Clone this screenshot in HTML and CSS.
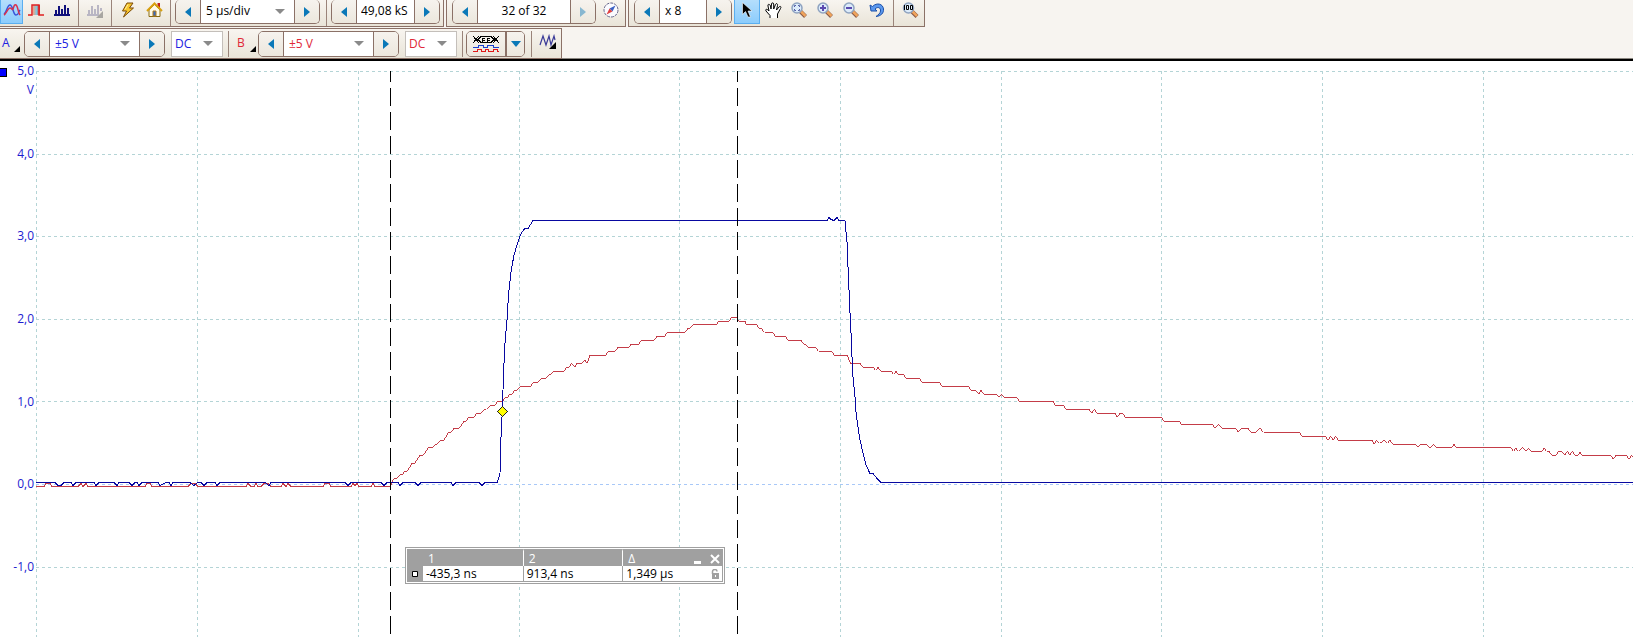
FILE: index.html
```html
<!DOCTYPE html>
<html lang="en">
<head>
<meta charset="utf-8">
<title>Oscilloscope</title>
<link rel="stylesheet" href="styles.css">
</head>
<body>
<svg class="defs" aria-hidden="true">
  <symbol id="left" viewBox="0 0 6 10"><path d="M6 0V10L0 5Z" fill="#0a78b8"/></symbol>
  <symbol id="right" viewBox="0 0 6 10"><path d="M0 0V10L6 5Z" fill="#0a78b8"/></symbol>
  <symbol id="corner" viewBox="0 0 6 6"><path d="M6 0V6H0Z" fill="#000"/></symbol>
  <symbol id="lens" viewBox="0 0 16 16">
    <path d="M9.500 9.500L14.500 14.500" stroke="#8a5a48" stroke-width="4"/>
    <path d="M10 9.500L14.500 14" stroke="#f0a45c" stroke-width="2.500"/>
    <circle cx="6" cy="6" r="5" fill="#dcebfa" stroke="#8fa3c0" stroke-width="1.500"/>
  </symbol>
  <linearGradient id="pulse"><stop offset="0" stop-color="#f8a080"/><stop offset=".5" stop-color="#80c8dc"/><stop offset="1" stop-color="#e02020"/></linearGradient>
</svg>
<header class="head">
  <div class="bar-row">
    <div class="bar bar-main">
      <button class="tool tool-edge on" aria-label="Scope mode"><svg width="18" height="14"><path d="M1 11C4 9 4 2 7 2S10 12 13 12S15 9 17 7" fill="none" stroke="#3a55d8" stroke-width="1.500"/><path d="M1 12C3 11 5 5 7 5S9 8 10 6S11 1 13 2S15 10 17 12" fill="none" stroke="#d8304c" stroke-width="1.500"/></svg></button>
      <button class="tool" aria-label="Persistence mode"><svg width="16" height="14"><path d="M5 2H12V12H5Z" fill="url(#pulse)"/><path d="M0 12H4V2H11V12H16" fill="none" stroke="#e02020" stroke-width="1.500"/></svg></button>
      <button class="tool" aria-label="Spectrum mode"><svg width="16" height="14"><path d="M0 12H16M2 12V7M5 12V3M8 12V6M11 12V2M14 12V5" stroke="#10107c" stroke-width="2"/></svg></button>
      <span class="sep"></span>
      <button class="tool" aria-label="Spectrum options" disabled><svg width="17" height="16"><path d="M0 13H12M2 13V8M5 13V4M8 13V7M11 13V3M14 9V6" stroke="#b9b6c4" stroke-width="2"/><path d="M16 9V16H9Z" fill="#a8a6a2"/></svg></button>
      <span class="sep"></span>
      <button class="tool" aria-label="Auto setup"><svg width="14" height="16"><path d="M6 1H12L8.500 6H12.500L2.500 15L5.500 9H1.500Z" fill="#f7c52c" stroke="#7a4a08"/><path d="M7 2.500L4 7.500" stroke="#fff2a0"/></svg></button>
      <button class="tool" aria-label="Home"><svg width="17" height="16"><path d="M11.500 1H14V6H11.500Z" fill="#c02020"/><path d="M3 8L8.500 2.500L14 8V14.500H3Z" fill="#fffbe8" stroke="#8a6a10"/><path d="M1 9L8.500 1.500L16 9" fill="none" stroke="#d8a010" stroke-width="2"/><path d="M7 9H10V14H7Z" fill="#3a6cc0" stroke="#b07818"/></svg></button>
      <span class="sep"></span>
      <div class="spin">
        <button aria-label="Shorter time"><svg width="6" height="10"><use href="#left"/></svg></button>
        <span class="drop"><select class="w-time" aria-label="Timebase"><option>5 µs/div</option></select></span>
        <button aria-label="Longer time"><svg width="6" height="10"><use href="#right"/></svg></button>
      </div>
      <span class="sep"></span>
      <div class="spin">
        <button aria-label="Fewer samples"><svg width="6" height="10"><use href="#left"/></svg></button>
        <input class="w-samples" aria-label="Samples" value="49,08 kS">
        <button aria-label="More samples"><svg width="6" height="10"><use href="#right"/></svg></button>
      </div>
    </div>
    <div class="bar">
      <div class="spin">
        <button aria-label="Previous buffer"><svg width="6" height="10"><use href="#left"/></svg></button>
        <input class="w-buffer" aria-label="Buffer" value="32 of 32">
        <button aria-label="Next buffer" disabled><svg width="6" height="10"><use href="#right"/></svg></button>
      </div>
      <button class="tool" aria-label="Buffer navigator"><svg width="16" height="16"><circle cx="8" cy="8" r="7" fill="#fbfbff" stroke="#66668a" stroke-dasharray="3 1"/><path d="M12.500 3.500L9.500 9.500L6.500 6.500Z" fill="#3c62c4"/><path d="M3.500 12.500L6.500 6.500L9.500 9.500Z" fill="#e04040"/></svg></button>
    </div>
    <div class="bar">
      <div class="spin">
        <button aria-label="Zoom down"><svg width="6" height="10"><use href="#left"/></svg></button>
        <input class="w-zoom" aria-label="Zoom factor" value="x 8">
        <button aria-label="Zoom up"><svg width="6" height="10"><use href="#right"/></svg></button>
      </div>
      <button class="tool on" aria-label="Select"><svg width="12" height="16"><path d="M1.500 .500V12.500L4.500 9.500L7 15H9.500L7 9H11Z" fill="#000" stroke="#fff" stroke-width=".6"/></svg></button>
      <button class="tool" aria-label="Hand"><svg width="17" height="17"><path d="M5 16V13.500L1 9C0 7 2 6.500 4 9L3 4C2.500 2 4.500 1.500 5.500 4L6 7L6.500 2C6.500 .500 8.500 .500 8.700 2V7L10.500 2.500C11 1 13 1.500 12.500 3.500L11.500 8L14 5C15.500 3.500 16.500 5 15.500 6.500L12.500 12V16" fill="#fff" stroke="#000"/></svg></button>
      <button class="tool" aria-label="Zoom window"><svg width="16" height="16"><use href="#lens"/><path d="M3.500 5V3.500H5M7 3.500H8.500V5M8.500 7V8.500H7M5 8.500H3.500V7" fill="none" stroke="#5560a8"/></svg></button>
      <button class="tool" aria-label="Zoom in"><svg width="16" height="16"><use href="#lens"/><path d="M3 6H9M6 3V9" stroke="#5a4ab0" stroke-width="2"/></svg></button>
      <button class="tool" aria-label="Zoom out"><svg width="16" height="16"><use href="#lens"/><path d="M3 6H9" stroke="#5a4ab0" stroke-width="2"/></svg></button>
      <button class="tool" aria-label="Undo zoom"><svg width="16" height="16"><path d="M1 3L2 9H8L6 7C9 4 12 6 11.500 9C11.300 11.500 9 13 7 14.500C12 14 15 11 14.500 7C14 2 8 0 3.500 4.500Z" fill="#5b98ee" stroke="#1c50a8"/></svg></button>
      <span class="sep"></span>
      <button class="tool" aria-label="Zoom 100"><svg width="17" height="16"><use href="#lens"/><path d="M2.500 3V8M4.500 3.500H6.500V7.500H4.500ZM8.500 3.500H10.500V7.500H8.500Z" fill="none" stroke="#000"/></svg></button>
    </div>
  </div>
  <div class="bar-row">
    <div class="bar bar-channels">
      <button class="chan chan-first a">A<svg width="6" height="6"><use href="#corner"/></svg></button>
      <div class="spin a">
        <button aria-label="Smaller range A"><svg width="6" height="10"><use href="#left"/></svg></button>
        <span class="drop"><select class="w-range" aria-label="Range A"><option>±5 V</option></select></span>
        <button aria-label="Larger range A"><svg width="6" height="10"><use href="#right"/></svg></button>
      </div>
      <span class="drop box a"><select class="w-coupling" aria-label="Coupling A"><option>DC</option></select></span>
      <span class="sep"></span>
      <button class="chan b">B<svg width="6" height="6"><use href="#corner"/></svg></button>
      <div class="spin b">
        <button aria-label="Smaller range B"><svg width="6" height="10"><use href="#left"/></svg></button>
        <span class="drop"><select class="w-range" aria-label="Range B"><option>±5 V</option></select></span>
        <button aria-label="Larger range B"><svg width="6" height="10"><use href="#right"/></svg></button>
      </div>
      <span class="drop box b"><select class="w-coupling" aria-label="Coupling B"><option>DC</option></select></span>
      <span class="sep"></span>
      <div class="spin">
        <button class="digital" aria-label="Digital channels"><svg class="crisp" width="26" height="18"><path d="M0 1L6 8M0 8L6 1M5 4.500L8 1.500H18L21 4.500L18 7.500H8ZM20 1L26 8M20 8L26 1" fill="none" stroke="#000"/><path d="M9.500 7V3.500H12M9.500 5.500H12M14.500 7V3.500H17M14.500 5.500H17" fill="none" stroke="#000"/><path d="M0 12.500H5V10.500H10V12.500H14V10.500H20V12.500H26" fill="none" stroke="#1840d0"/><path d="M0 16.500H4V14.500H8V16.500H12V14.500H15V16.500H20V14.500H24V16.500H26" fill="none" stroke="#e01818"/></svg></button>
        <button class="more" aria-label="Digital options"><svg width="10" height="6"><path d="M0 0H10L5 6Z" fill="#0a78b8"/></svg></button>
      </div>
      <span class="sep"></span>
      <button class="tool tool-wide" aria-label="Signal generator"><svg width="18" height="16"><path d="M1 11L4 2L7 11L10 2L12 11L15 2L16 6" fill="none" stroke="#3a3a98" stroke-width="1.200"/><path d="M17 8V15H10Z" fill="#000"/></svg></button>
    </div>
  </div>
</header>
<main class="chart">
  <svg class="plot" role="img" aria-label="Channel A and B waveforms">
    <g transform="translate(0 -61)">
      <g class="grid">
        <path d="M36.500 71V3000M197.500 71V3000M358.500 71V3000M519.500 71V3000M679.500 71V3000M840.500 71V3000M1001.500 71V3000M1161.500 71V3000M1322.500 71V3000M1483.500 71V3000"/>
        <path d="M36 71.500H5000M36 154.500H5000M36 236.500H5000M36 319.500H5000M36 401.500H5000M36 484.500H5000M36 567.500H5000"/>
      </g>
      <path d="M-1.500 68.500H6.500V76.500H-1.500Z" fill="#00f" stroke="#000"/>
      <g class="axis">
        <text x="34" y="75">5,0</text><text x="34" y="94">V</text>
        <text x="34" y="158">4,0</text><text x="34" y="240">3,0</text>
        <text x="34" y="323">2,0</text><text x="34" y="406">1,0</text>
        <text x="34" y="488">0,0</text><text x="34" y="571">-1,0</text>
      </g>
      <path class="zero" d="M36 484.500H5000"/>
      <path class="red" d="M36 486.500H44l2-3h4l2 3H78l3-3l2 3l3-3l2 3H145l2-3h3l2 3H188l3-3h4l3 3H246l2-3l3 3h3l2-3l2 3h3l3-3h4l3 3H281l2-3l3 3l2-3l3 3H323l2-3h4l2 3H351l2-3l2 2l2-2l2 3H371l2-3l2 3H390L392 482"/>
      <g transform="translate(380 190) scale(.33333)"><polyline class="red wide" points="32,889 35,878 42,866 50,866 62,853 70,853 73,844 82,844 96,820 104,820 120,796 130,796 146,772 160,772 166,763 172,763 181,751 191,751 206,727 213,727 222,715 238,715 252,694 257,694 266,682 282,682 290,670 303,670 315,658 319,658 331,646 345,646 353,634 368,634 376,622 384,622 388,613 396,613 404,601 411,601 421,589 452,589 460,577 474,577 484,565 499,565 508,553 513,553 521,544 551,544 560,532 567,532 575,520 584,532 591,520 606,520 614,510 622,520 630,496 677,496 685,484 706,484 714,472 748,472 752,463 776,463 784,451 822,451 831,439 854,439 862,427 915,427 924,415 931,415 940,403 1010,403 1015,394 1047,394 1054,382 1071,382 1076,394 1095,394 1098,403 1130,403 1137,415 1143,415 1154,427 1178,427 1186,439 1216,439 1225,451 1263,451 1271,463 1277,463 1285,472 1306,472 1316,484 1355,484 1363,496 1381,496"/></g>
      <g transform="translate(840 200) scale(.33333)"><polyline class="red wide" points="0,466 22,466 31,490 60,490 69,502 99,502 107,511 114,502 123,514 153,514 161,523 168,514 175,523 190,523 198,535 238,535 245,547 299,547 306,559 385,559 392,571 407,571 416,583 423,571 431,583 470,583 476,592 484,583 491,592 530,592 538,604 639,604 646,616 670,616 677,628 747,628 755,640 763,628 770,640 825,640 832,652 840,640 848,640 856,652 964,652 972,664 1018,664 1024,673 1081,673"/></g>
      <g transform="translate(1200 380) scale(.33333)"><polyline class="red wide" points="0,133 37,133 45,145 56,133 66,145 107,145 115,157 124,145 144,145 152,157 168,157 180,145 191,157 299,157 306,169 376,169 385,181 392,169 400,181 407,169 415,181 516,181 523,193 530,181 539,190 552,181 562,190 570,181 579,193 647,193 655,202 662,193 680,193 686,202 694,202 700,193 708,202 756,202 762,193 769,202 932,202 940,214 948,205 955,214 967,202 978,214 986,205 994,214 1025,214 1032,205 1040,214 1047,214 1056,226 1067,226 1076,214 1085,214 1094,226 1102,214 1109,226 1117,214 1125,226 1133,226 1140,217 1147,226 1232,226 1240,238 1248,226 1280,226 1287,238 1294,226 1299,232"/></g>
      <path class="blue" d="M36 482.500H55l3 3h3l3-3H71l2 3l3-3H94l2 3l3-3H114l3 3l2-3H129l3 3l3-3h2l2 3l3-3H158l2 3l6-3h3l2 3l2-3H190l4 3l4-3h3l3 3l3-3H215l2 3l3-3H265l4 3l2-3H345l3 3l3-3H381l3 3l3-3H398l2 3l3-3H415l3 3l3-3H451l2 3l3-3H479l3 3l3-3H497L499 477L500 473L501 437L502 417L503 390L504 363L505 343L507 320L508 303L509 290L511 272L514 255L517 245L520 236L522 232L525 228.500H528L533 220.500H827L829 217.500L831 219.500L834 220.500L837 217.500L839 220.500H845L846 232L847 242L848 267L849 290L850 313L851 333L852 357L853 377L855 397L856 412L858 427L860 440L863 453L866 465L870 473.500H873L877 478.500L881 482.500H5000"/>
      <path class="cursor" d="M390.500 71V3000M737.500 71V3000"/>
      <path d="M497.500 411.500L502.500 406.500L507.500 411.500L502.500 416.500Z" fill="#ff0" stroke="#222"/>
    </g>
  </svg>
  <section class="ruler" aria-label="Ruler measurements">
    <table>
      <thead><tr><th class="mark"></th><th>1</th><th>2</th><th class="last"><span class="cell">Δ<span class="acts"><button aria-label="Minimise"><svg width="8" height="10"><path d="M0 8.500H7" stroke="#fff" stroke-width="3"/></svg></button><button aria-label="Close"><svg width="10" height="10"><path d="M1 1L9 9M9 1L1 9" stroke="#fff" stroke-width="2"/></svg></button></span></span></th></tr></thead>
      <tbody><tr><th class="mark" aria-label="Time ruler"><svg width="6" height="6"><path d="M.500 .500H5.500V5.500H.500Z" fill="#fff" stroke="#000"/></svg></th><td>-435,3 ns</td><td>913,4 ns</td><td><span class="cell">1,349 µs<svg width="8" height="10"><path d="M1.500 5V2.500Q1.500 .500 4 .500Q6 .500 6 2.500" fill="none" stroke="#a0a0a0" stroke-width="1.500"/><path d="M1 4H8V10H1Z" fill="#a0a0a0"/><path d="M4 6H5V8H4Z" fill="#fff"/></svg></span></td></tr></tbody>
    </table>
  </section>
</main>
</body>
</html>
```
FILE: styles.css
```css
* { box-sizing: border-box; }
html, body { height: 100%; }
body {
  margin: 0;
  display: flex;
  flex-direction: column;
  overflow: hidden;
  background: #fff;
  color: #000;
  font: 12px "Open Sans", "Noto Sans", sans-serif;
}
.defs { position: absolute; width: 0; height: 0; }
button, input, select { font: inherit; color: inherit; margin: 0; }
svg { display: block; flex: none; }
.crisp { shape-rendering: crispEdges; }

/* Toolbars */
.head {
  background: #f7f4f0;
  border-bottom: 2px solid #000;
  box-shadow: inset 0 -1px #8a8680;
}
.bar-row { display: flex; gap: 2px; height: 27px; }
.bar-row + .bar-row { height: 32px; padding-top: 1px; }
.bar {
  display: flex;
  align-items: flex-start;
  padding: 0 1px 0 5px;
  border: solid #8b7167;
  border-width: 0 1px 1px;
  background: linear-gradient(#f8f5f0, #e9e4d8);
}
.bar-main { padding: 0; border-left: 0; }
.bar-channels {
  align-items: center;
  padding: 0;
  border-width: 1px 1px 1px 0;
}
.tool {
  width: 26px;
  height: 24px;
  padding: 0 0 4px;
  border: 0;
  background: none;
  display: flex;
  align-items: center;
  justify-content: center;
}
.tool-edge { width: 23px; }
.tool-wide { width: 26px; height: 26px; }
.tool.on {
  border: solid #5aaef0;
  border-width: 0 1px 1px;
  background: linear-gradient(#b4defc, #8cccfc);
}
.sep { width: 1px; height: 26px; margin: 0 3px; background: #9a847a; }
.spin {
  display: flex;
  height: 24px;
  margin: 0 2px 0 0;
  border: 1px solid #8b7167;
  border-top: 0;
  border-radius: 5px;
  overflow: hidden;
}
.bar-main .spin { margin: 0 3px 0 1px; }
.bar-channels .spin { height: 26px; margin-right: 3px; border-top: 1px solid #8b7167; }
.spin button {
  width: 25px;
  padding: 0;
  border: 0;
  background: linear-gradient(#f6f3ee, #ece7dd);
  display: flex;
  align-items: center;
  justify-content: center;
}
.spin button:first-child { border-right: 1px solid #8b7167; }
.spin button:last-child { border-left: 1px solid #8b7167; }
.spin button:disabled svg { opacity: .45; }
.spin .digital { width: 39px; }
.spin .more { width: 18px; border-left: 0; }
.drop { display: flex; position: relative; background: #fff; }
.drop::after {
  content: "";
  position: absolute;
  right: 9px;
  top: 50%;
  margin-top: -3px;
  border: 5px solid transparent;
  border-top-color: #8a8a8a;
  border-bottom: 0;
  pointer-events: none;
}
.box { height: 26px; margin: 0 2px 0 3px; border: 1px solid #c4bfba; }
select, input {
  appearance: none;
  border: 0;
  border-radius: 0;
  background: #fff;
  padding: 0 5px 2px;
  outline: 0;
}
.bar-channels select { padding-bottom: 0; }
.box select { padding: 0 3px; }
.w-time { width: 93px; }
.w-samples { width: 57px; padding-left: 4px; padding-right: 0; }
.w-buffer { width: 92px; text-align: center; }
.w-zoom { width: 46px; }
.w-range { width: 89px; }
.w-coupling { width: 50px; }
.chan {
  width: 26px;
  height: 26px;
  padding: 0 0 2px 5px;
  border: 0;
  background: none;
  display: flex;
  align-items: center;
  gap: 5px;
}
.chan-first { width: 24px; padding-left: 2px; gap: 4px; }
.chan svg { align-self: flex-end; margin-bottom: 3px; }
.a { color: #2020e0; }
.b { color: #e02838; }

/* Plot */
.chart { position: relative; flex: 1; min-height: 0; }
.plot { width: 100%; height: 100%; shape-rendering: crispEdges; }
.plot path, .plot polyline { stroke-width: 1; }
.grid path { fill: none; stroke: #b4d4d6; stroke-dasharray: 3 3; }
.axis { fill: #1c1cd0; text-anchor: end; }
.plot .red, .plot .blue, .plot .zero { fill: none; }
.zero { stroke: #a8c8f8; stroke-dasharray: 3 3; }
.red { stroke: #c43c48; }
.plot .wide { stroke-width: 3; }
.blue { stroke: #0808a0; }
.cursor { fill: none; stroke: #000; stroke-dasharray: 18 6; stroke-dashoffset: 7; }

/* Floating ruler window */
.ruler {
  position: absolute;
  left: 405px;
  top: 486px;
  width: 320px;
  border: 1px solid #a0a0a0;
  padding: 1px;
  background: #fff;
}
.ruler table {
  width: 100%;
  table-layout: fixed;
  border-collapse: separate;
  border-spacing: 0;
  border: solid #a0a0a0;
  border-width: 0 1px 1px 0;
}
.ruler th, .ruler td {
  height: 15px;
  padding: 0 3px;
  line-height: 15px;
  text-align: left;
  font-weight: 400;
}
.ruler th { background: #a0a0a0; color: #fff; padding-left: 5px; }
.ruler thead th { height: 17px; border-top: 2px solid #a0a0a0; }
.ruler thead th + th + th { border-left: 1px solid #fff; }
.ruler td + td { border-left: 1px solid #a0a0a0; }
.ruler .mark { width: 16px; padding: 0 5px; }
.ruler .last { padding-right: 2px; }
.cell { display: flex; align-items: center; justify-content: space-between; }
.acts { display: flex; gap: 8px; }
.acts button { padding: 0; border: 0; background: none; }
```
